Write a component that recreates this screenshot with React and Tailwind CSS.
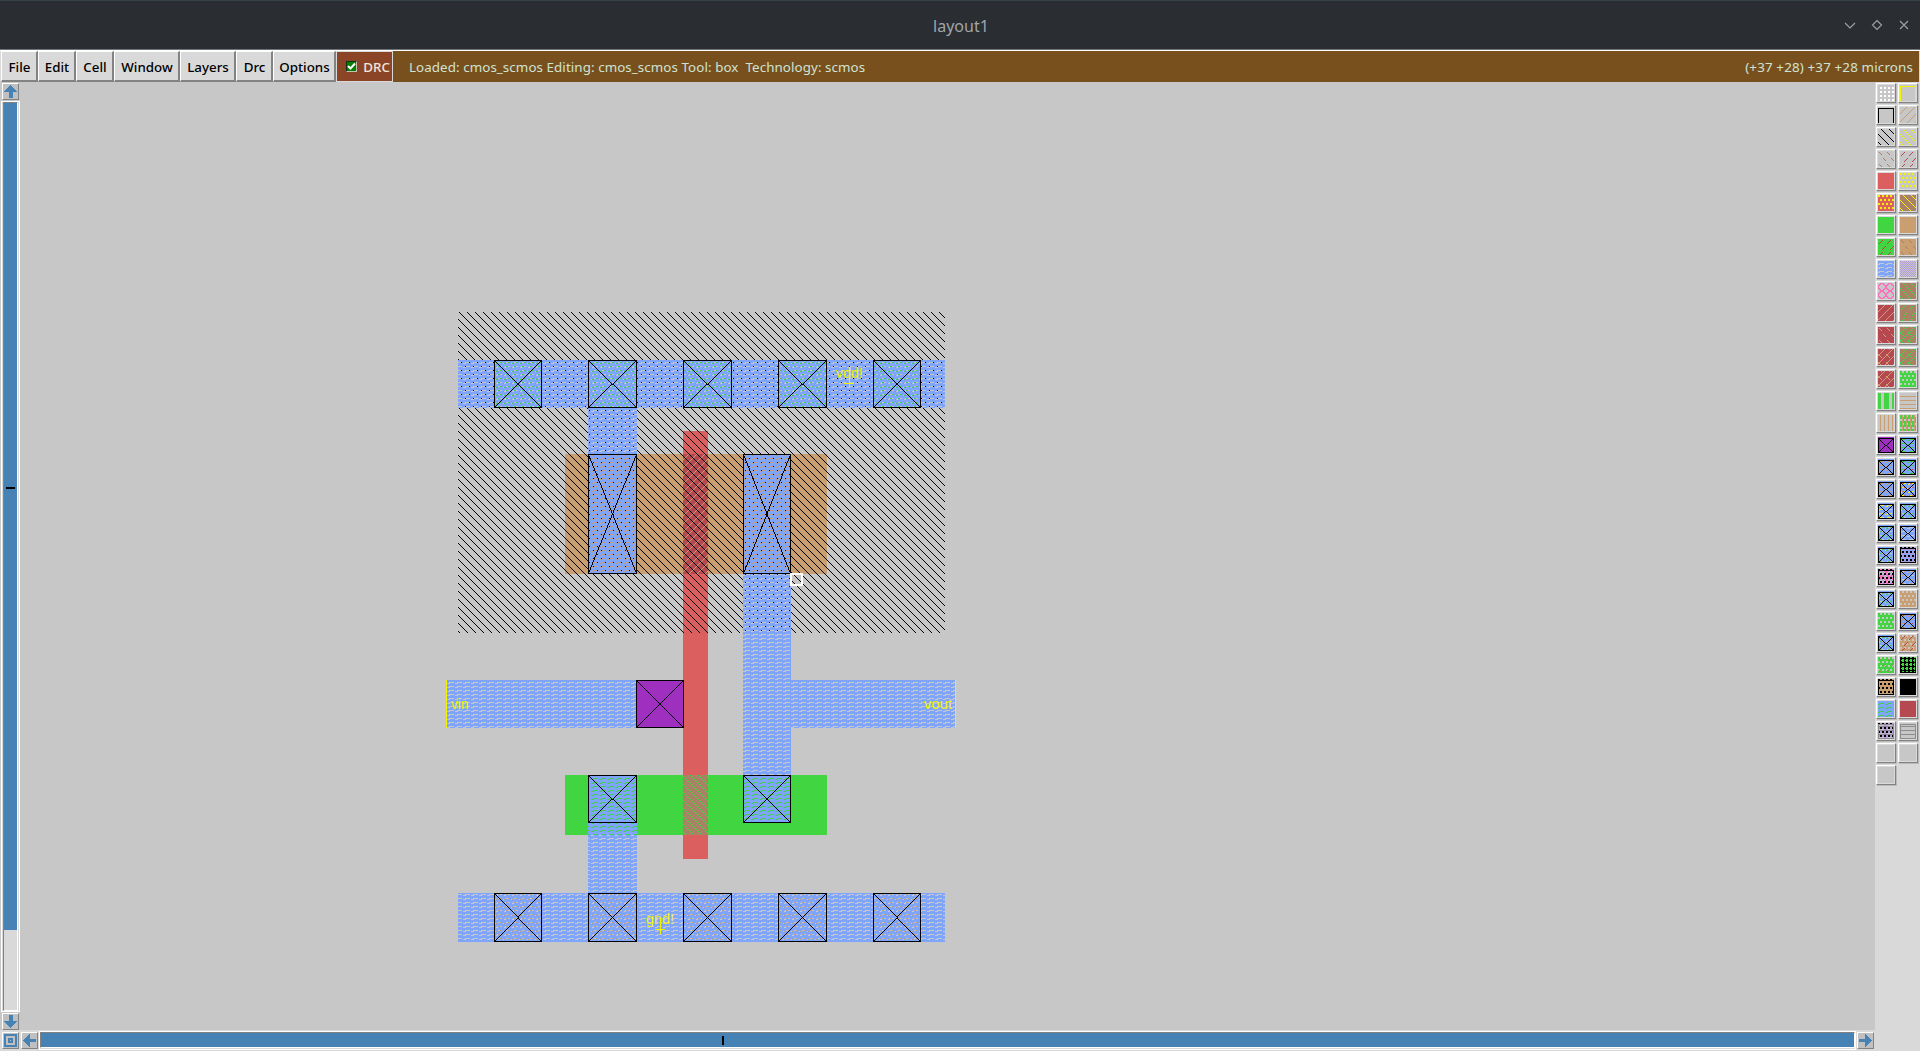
import React from "react";

const C = {
  bg: "#c7c7c7", red: "#db5f5f", green: "#41d641", tan: "#c99f72", blue: "#7fa5fa",
  purple: "#9f2fbf", crimson: "#b64852", brown: "#a98266", yellow: "#f3f300", black: "#000000",
  pink: "#ff6fc0", lilac: "#b49bdc", white: "#ffffff", gray: "#8c8c8c",
};

const rowsFrom = (fn, w = 8, h = 8) =>
  Array.from({ length: h }, (_, y) => Array.from({ length: w }, (_, x) => (fn(x, y) ? "#" : ".")).join(""));

// Bitmap stipples, one string per pixel row.
const STIPPLES = {
  metal: ["########", "########", "#.....##", "..#####.", "########", "########", "#.....##", "..#####."],
  back: rowsFrom((x, y) => (x - y + 8) % 8 === 3),
  fwd: rowsFrom((x, y) => (x + y) % 8 === 6),
  backDash: rowsFrom((x, y) => (y < 6 ? y > 0 && y < 4 && x === y : y > 6 && y < 10 && x === y - 2), 8, 12),
  fwdDash: rowsFrom((x, y) => (y < 6 ? y > 0 && y < 5 && x === 5 - y : y > 6 && y < 11 && x === 14 - y), 8, 12),
  weave: rowsFrom((x, y) => (x + y) % 8 === 6 || ((x - y + 8) % 8 === 3 && x < 4)),
  mesh: ["##..##..", "##..##..", "########", "########", "..##..##", "..##..##", "########", "########"],
  spots: ["##..##..", "##..##..", "........", "........", "..##..##", "..##..##", "........", "........"],
  studs: ["........", "........", "##..##..", "##..##..", "........", "........", "..##..##", "..##..##"],
  dots: ["........", "........", "..##..##", "..##..##", "........", "........", "..##..##", "..##..##"],
  grid: rowsFrom((x, y) => x % 4 === 0 || y % 4 === 1 || (x % 4 === 1 && y % 2 === 0)),
  fine: rowsFrom((x, y) => (x + y) % 2 === 0),
  vline: rowsFrom((x) => x % 4 === 2),
  hline: rowsFrom((x, y) => y % 4 === 3),
  rings: ["..####..", ".##..##.", "##....##", "#......#", "#......#", "##....##", ".##..##.", "..####.."],
};

const toPath = (rows) =>
  rows.map((r, y) => [...r].map((c, x) => (c === "#" ? `M${x} ${y}h1v1h-1z` : "")).join("")).join("");

const COLOR_KEYS = Object.keys(C);

function PatternDefs() {
  return (
    <svg width="0" height="0" className="absolute">
      <defs>
        {Object.entries(STIPPLES).flatMap(([name, rows]) =>
          COLOR_KEYS.map((k) => (
            <pattern key={name + k} id={`${name}-${k}`} width="8" height={rows.length} patternUnits="userSpaceOnUse">
              <path d={toPath(rows)} fill={C[k]} shapeRendering="crispEdges" />
            </pattern>
          ))
        )}
      </defs>
    </svg>
  );
}

const paint = (s) => (s.includes("-") ? `url(#${s})` : C[s]);

// Fills of each swatch, back to front. "X" is a contact frame, "O:" an outline, "U:" an outline open at the bottom, "V:" bars.
const PALETTE = [
  ["dots-white"], ["U:yellow"],
  ["U:black"], ["fwd-tan"],
  ["back-black"], ["back-yellow"],
  ["backDash-brown"], ["fwdDash-crimson"],
  ["red"], ["spots-yellow"],
  ["red", "spots-yellow"], ["brown", "back-yellow"],
  ["green"], ["tan"],
  ["green", "fwdDash-crimson"], ["tan", "backDash-brown"],
  ["metal-blue"], ["fine-lilac"],
  ["rings-pink"], ["brown", "back-green"],
  ["crimson", "fwd-tan"], ["brown", "fwdDash-green"],
  ["crimson", "backDash-tan"], ["brown", "weave-green"],
  ["crimson", "weave-tan"], ["brown", "weave-green"],
  ["crimson", "weave-tan"], ["mesh-green"],
  ["V:green"], ["hline-tan"],
  ["vline-tan"], ["mesh-green", "vline-tan"],
  ["purple", "X"], ["green", "metal-blue", "X"],
  ["tan", "metal-blue", "X"], ["green", "fwdDash-crimson", "metal-blue", "X"],
  ["tan", "backDash-brown", "metal-blue", "X"], ["red", "studs-yellow", "metal-blue", "X"],
  ["studs-yellow", "metal-blue", "X"], ["studs-green", "metal-blue", "X"],
  ["studs-green", "metal-blue", "X"], ["metal-blue", "X"],
  ["studs-green", "metal-blue", "X"], ["blue", "fine-lilac", "spots-black", "O:black"],
  ["fine-lilac", "rings-pink", "spots-black", "O:black"], ["studs-tan", "metal-blue", "X"],
  ["studs-green", "metal-blue", "X"], ["mesh-tan"],
  ["mesh-green"], ["tan", "fwdDash-crimson", "metal-blue", "X"],
  ["studs-green", "metal-blue", "X"], ["mesh-tan", "fwdDash-crimson"],
  ["mesh-green", "backDash-brown"], ["green", "grid-black", "O:black"],
  ["tan", "spots-black", "O:black"], ["black"],
  ["green", "metal-blue"], ["crimson"],
  ["metal-lilac", "spots-black", "hline-gray", "O:gray"], ["hline-gray", "O:gray"],
  [], [],
  [],
];

// One-pixel line without antialiasing, as a path of unit squares.
function pixelLine(x0, y0, x1, y1) {
  const n = Math.max(Math.abs(x1 - x0), Math.abs(y1 - y0));
  let d = "";
  for (let i = 0; i <= n; i++) {
    d += `M${Math.round(x0 + ((x1 - x0) * i) / n)} ${Math.round(y0 + ((y1 - y0) * i) / n)}h1v1h-1z`;
  }
  return d;
}

const Contact = ({ x, y, x2, y2 }) => (
  <g>
    <rect x={x + 0.5} y={y + 0.5} width={x2 - x - 1} height={y2 - y - 1} fill="none" stroke="#000" />
    <path d={pixelLine(x, y, x2 - 1, y2 - 1) + pixelLine(x2 - 1, y, x, y2 - 1)} />
  </g>
);

function Swatch({ layers }) {
  return (
    <div className="size-5 border border-t-white border-l-white border-r-[#828282] border-b-[#828282] bg-[#d9d9d9] p-px shadow-[1px_1px_0_#bababa]">
      <svg width="16" height="16" viewBox="0 0 16 16" shapeRendering="crispEdges" className="block">
        <rect width="16" height="16" fill={C.bg} />
        {layers.map((l, i) => {
          if (l === "X") return <Contact key={i} x={0} y={1} x2={16} y2={16} />;
          if (l.startsWith("O:")) return <rect key={i} x="0.5" y="1.5" width="15" height="14" fill="none" stroke={C[l.slice(2)]} />;
          if (l.startsWith("U:")) return <path key={i} d="M0.5 16V1.5H15.5V16" fill="none" stroke={C[l.slice(2)]} />;
          if (l.startsWith("V:")) return <path key={i} d="M0 0h3v16h-3zM6 0h5v16h-5zM14 0h2v16h-2z" fill={C[l.slice(2)]} />;
          return <rect key={i} width="16" height="16" fill={paint(l)} />;
        })}
      </svg>
    </div>
  );
}

const Box = ({ x, y, x2, y2, fill }) => <rect x={x} y={y} width={x2 - x} height={y2 - y} fill={paint(fill)} />;

const RAIL = [[494, 542], [588, 637], [683, 732], [778, 827], [873, 921]];

function Layout() {
  return (
    <svg width="1855" height="948" viewBox="20 82 1855 948" shapeRendering="crispEdges" className="block shrink-0 bg-[#c7c7c7]">
      <Box x={565} y={454} x2={827} y2={574} fill="tan" />
      <Box x={565} y={775} x2={827} y2={835} fill="green" />
      <Box x={683} y={431} x2={708} y2={859} fill="red" />
      <Box x={683} y={454} x2={708} y2={574} fill="crimson" />
      <Box x={683} y={454} x2={708} y2={574} fill="fwd-tan" />
      <Box x={683} y={775} x2={708} y2={835} fill="brown" />
      <Box x={683} y={775} x2={708} y2={835} fill="back-green" />
      <Box x={458} y={312} x2={945} y2={633} fill="back-black" />
      {RAIL.map(([a, b]) => (
        <g key={a}>
          <Box x={a} y={360} x2={b} y2={408} fill="bg" />
          <Box x={a} y={360} x2={b} y2={408} fill="studs-green" />
          <Box x={a} y={893} x2={b} y2={942} fill="studs-tan" />
        </g>
      ))}
      <Box x={458} y={360} x2={945} y2={408} fill="metal-blue" />
      <Box x={588} y={408} x2={637} y2={574} fill="metal-blue" />
      <Box x={743} y={454} x2={791} y2={823} fill="metal-blue" />
      <Box x={791} y={680} x2={956} y2={728} fill="metal-blue" />
      <Box x={446} y={680} x2={636} y2={728} fill="metal-blue" />
      <Box x={588} y={775} x2={637} y2={893} fill="metal-blue" />
      <Box x={458} y={893} x2={945} y2={942} fill="metal-blue" />
      <Box x={636} y={680} x2={684} y2={728} fill="purple" />
      {RAIL.map(([a, b]) => (
        <g key={a}>
          <Contact x={a} y={360} x2={b} y2={408} />
          <Contact x={a} y={893} x2={b} y2={942} />
        </g>
      ))}
      <Contact x={588} y={454} x2={637} y2={574} />
      <Contact x={743} y={454} x2={791} y2={574} />
      <Contact x={588} y={775} x2={637} y2={823} />
      <Contact x={743} y={775} x2={791} y2={823} />
      <Contact x={636} y={680} x2={684} y2={728} />
      <rect x="791" y="574" width="11" height="11" fill="none" stroke="#fff" strokeWidth="2" />
      <path
        d="M849 367h1v21h-1zM844 383h10v1h-10zM660 918h1v16h-1zM655 929h10v1h-10zM446 680h1v48h-1zM955 680h1v48h-1z"
        fill={C.yellow}
      />
      <g fill={C.yellow} fontFamily="Liberation Sans, sans-serif" fontSize="15">
        <text x="836" y="378" textLength="27" lengthAdjust="spacingAndGlyphs">vdd!</text>
        <text x="646" y="924" textLength="28" lengthAdjust="spacingAndGlyphs">gnd!</text>
        <text x="451" y="709" textLength="17.5" lengthAdjust="spacingAndGlyphs">vin</text>
        <text x="924" y="709" textLength="28" lengthAdjust="spacingAndGlyphs">vout</text>
      </g>
    </svg>
  );
}

const ARROWS = {
  up: "M6 0h1v1h1v1h1v1h1v1h1v1h1v1h1v1h-4v6h-4v-6h-5v-1h1v-1h1v-1h1v-1h1v-1h1v-1h1z",
  down: "M5 0h4v6h4v1h-1v1h-1v1h-1v1h-1v1h-1v1h-1v1h-1v-1h-1v-1h-1v-1h-1v-1h-1v-1h-1v-1h-1v-1h5z",
  left: "M7 0v5h6v3h-6v5h-1v-1h-1v-1h-1v-1h-1v-1h-1v-1h-1v-1h-1v-1h1v-1h1v-1h1v-1h1v-1h1v-1h1v-1z",
  right: "M6 0v5h-6v3h6v5h1v-1h1v-1h1v-1h1v-1h1v-1h1v-1h1v-1h-1v-1h-1v-1h-1v-1h-1v-1h-1v-1h-1v-1z",
};

function ScrollButton({ dir }) {
  return (
    <div className="size-[17px] shrink-0 border border-t-white border-l-white border-r-[#828282] border-b-[#828282] bg-[#c0c0c0] p-px">
      <svg width="13" height="13" viewBox="0 0 13 13" className="block" fill="#4682b4" shapeRendering="crispEdges">
        {dir ? <path d={ARROWS[dir]} /> : <path fillRule="evenodd" d="M0 0H13V13H0ZM2 2V11H11V2ZM4 4H9V9H4ZM6 6V7H7V6Z" />}
      </svg>
    </div>
  );
}

const MENUS = [
  ["File", "w-[37px]"], ["Edit", "w-[38px]"], ["Cell", "w-[38px]"], ["Window", "w-[66px]"],
  ["Layers", "w-14"], ["Drc", "w-[37px]"], ["Options", "w-[63px]"],
];

export default function App() {
  return (
    <div className="flex h-[1051px] w-[1920px] flex-col overflow-hidden bg-[#d9d9d9] font-['Noto_Sans',sans-serif] text-[13.33px] text-black">
      <PatternDefs />
      <header className="grid h-[50px] shrink-0 grid-cols-3 items-center border-t border-b border-t-[#374246] border-b-[#6f7375] bg-[#2a2d32]">
        <span />
        <h1 className="pt-0.5 pl-0.5 text-center text-base text-[#a1a5a8]">layout1</h1>
        <svg width="68" height="14" viewBox="0 0 68 14" fill="none" stroke="#9da1a4" strokeWidth="1.2" className="mr-[10px] justify-self-end">
          <path d="M3 5L8 10L13 5M35 2.5L39.5 7L35 11.5L30.5 7ZM58 3L66 11M66 3L58 11" />
        </svg>
      </header>
      <div className="flex h-8 shrink-0 border-t border-white pr-px">
        <nav className="flex pl-px">
          {MENUS.map(([name, w]) => (
            <button key={name} className={`${w} flex items-center justify-center border-t border-r-2 border-b-2 border-l border-t-white border-r-[#828282] border-b-[#828282] border-l-white bg-[#d9d9d9] pt-[3px] pl-px font-medium`}>
              {name}
            </button>
          ))}
        </nav>
        <div className="flex w-[57px] items-center justify-end gap-1.5 border border-[#d9d9d9] bg-[#8b4526] pt-0.5 pr-[2px] font-medium text-[#f3e6dc]">
          <span className="mb-0.5 flex size-[11px] items-center justify-center border border-t-[#113311] border-r-[#c9c0b0] border-b-[#c9c0b0] border-l-[#113311] bg-[#008000]">
            <svg width="9" height="9" viewBox="0 0 9 9" fill="none" stroke="#fff" strokeWidth="2"><path d="M1 4L3.5 6.5L8 1.5" /></svg>
          </span>
          DRC
        </div>
        <div className="flex flex-1 items-center justify-between bg-[#78501e] pt-0.5 pr-[6px] pl-4 text-[#cfe3d4]">
          <span className="whitespace-pre tracking-[0.09px]">Loaded: cmos_scmos Editing: cmos_scmos Tool: box  Technology: scmos</span>
          <span className="tracking-[0.17px]">(+37 +28) +37 +28 microns</span>
        </div>
      </div>
      <main className="flex min-h-0 flex-1">
        <div className="flex min-w-0 flex-1 flex-col">
          <div className="flex h-[948px]">
            <aside className="flex w-5 flex-col items-start bg-[#c7c7c7] pt-px pl-[2px]">
              <ScrollButton dir="up" />
              <div className="-ml-px mt-px w-[19px] flex-1 border border-white bg-[#d9d9d9] px-px">
                <div className="flex h-full w-full flex-col border border-t-[#828282] border-r-white border-b-white border-l-[#828282]">
                  <div className="flex h-[827px] items-center justify-center bg-[#4682b4] pb-[57px]">
                    <div className="h-0.5 w-[9px] bg-black" />
                  </div>
                </div>
              </div>
              <div className="mt-px"><ScrollButton dir="down" /></div>
            </aside>
            <Layout />
          </div>
          <div className="flex flex-1 items-start pl-[2px]">
            <div className="pt-[2px]"><ScrollButton /></div>
            <div className="ml-[2px] pt-[2px]"><ScrollButton dir="left" /></div>
            <div className="mt-px ml-px h-[19px] flex-1 border border-white pb-px">
              <div className="flex h-full items-center border border-t-[#828282] border-r-white border-b-white border-l-[#828282] bg-[#4682b4] pl-[681px]">
                <div className="h-[9px] w-0.5 bg-black" />
              </div>
            </div>
            <div className="ml-px pt-[2px] pr-px"><ScrollButton dir="right" /></div>
          </div>
        </div>
        <aside className="w-[45px] shrink-0 pt-px pl-px">
          <div className="grid grid-cols-[20px_20px] gap-[2px]">
            {PALETTE.map((layers, i) => <Swatch key={i} layers={layers} />)}
          </div>
        </aside>
      </main>
    </div>
  );
}
